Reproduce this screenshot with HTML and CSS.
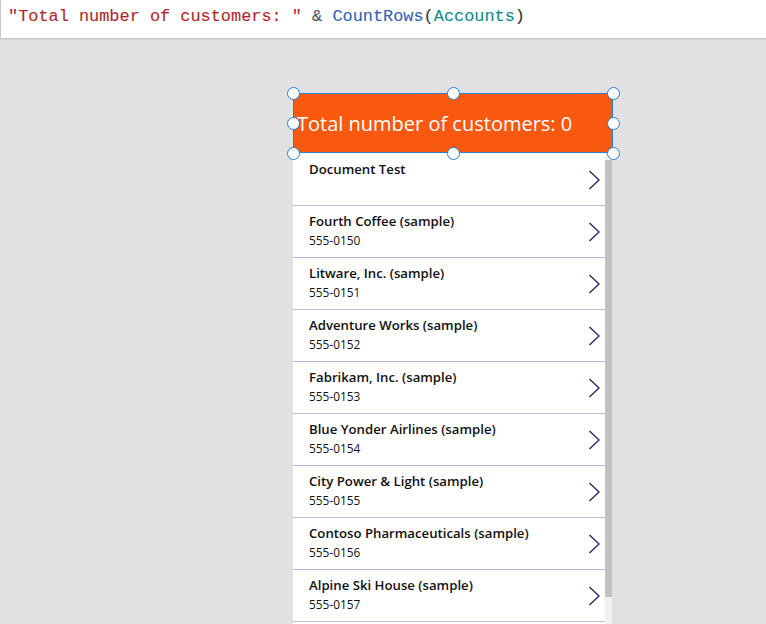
FILE: index.html
```html
<!DOCTYPE html>
<html>
<head>
<meta charset="utf-8">
<link rel="stylesheet" href="styles.css">
</head>
<body>
<div class="formula-bar"><span class="str">"Total number of customers: "</span> <span class="op">&amp;</span> <span class="fn">CountRows</span><span class="paren">(</span><span class="ident">Accounts</span><span class="paren">)</span></div>
<div class="canvas">
  <div class="screen">
    <div class="label-wrap">
      <div class="label">Total number of customers: 0</div>
      <span class="handle h-tl"></span>
      <span class="handle h-tc"></span>
      <span class="handle h-tr"></span>
      <span class="handle h-ml"></span>
      <span class="handle h-mr"></span>
      <span class="handle h-bl"></span>
      <span class="handle h-bc"></span>
      <span class="handle h-br"></span>
    </div>
    <div class="gallery">
      <div class="rows">
        <div class="row"><div class="texts"><div class="title">Document Test</div><div class="sub"></div></div><svg class="chev" viewBox="0 0 12 20"><path d="M1.5 1 L11 10 L1.5 19"/></svg></div>
        <div class="row"><div class="texts"><div class="title">Fourth Coffee (sample)</div><div class="sub">555-0150</div></div><svg class="chev" viewBox="0 0 12 20"><path d="M1.5 1 L11 10 L1.5 19"/></svg></div>
        <div class="row"><div class="texts"><div class="title">Litware, Inc. (sample)</div><div class="sub">555-0151</div></div><svg class="chev" viewBox="0 0 12 20"><path d="M1.5 1 L11 10 L1.5 19"/></svg></div>
        <div class="row"><div class="texts"><div class="title">Adventure Works (sample)</div><div class="sub">555-0152</div></div><svg class="chev" viewBox="0 0 12 20"><path d="M1.5 1 L11 10 L1.5 19"/></svg></div>
        <div class="row"><div class="texts"><div class="title">Fabrikam, Inc. (sample)</div><div class="sub">555-0153</div></div><svg class="chev" viewBox="0 0 12 20"><path d="M1.5 1 L11 10 L1.5 19"/></svg></div>
        <div class="row"><div class="texts"><div class="title">Blue Yonder Airlines (sample)</div><div class="sub">555-0154</div></div><svg class="chev" viewBox="0 0 12 20"><path d="M1.5 1 L11 10 L1.5 19"/></svg></div>
        <div class="row"><div class="texts"><div class="title">City Power &amp; Light (sample)</div><div class="sub">555-0155</div></div><svg class="chev" viewBox="0 0 12 20"><path d="M1.5 1 L11 10 L1.5 19"/></svg></div>
        <div class="row"><div class="texts"><div class="title">Contoso Pharmaceuticals (sample)</div><div class="sub">555-0156</div></div><svg class="chev" viewBox="0 0 12 20"><path d="M1.5 1 L11 10 L1.5 19"/></svg></div>
        <div class="row"><div class="texts"><div class="title">Alpine Ski House (sample)</div><div class="sub">555-0157</div></div><svg class="chev" viewBox="0 0 12 20"><path d="M1.5 1 L11 10 L1.5 19"/></svg></div>
        <div class="row row-empty"></div>
      </div>
      <div class="scrollbar"><div class="thumb"></div></div>
    </div>
  </div>
</div>
</body>
</html>
```

FILE: styles.css
```css
* { box-sizing: border-box; }
html, body { margin: 0; padding: 0; }
body {
  width: 766px;
  height: 624px;
  overflow: hidden;
  background: #e1e1e1;
  font-family: "Open Sans", "Liberation Sans", sans-serif;
}
.formula-bar {
  height: 39px;
  background: #ffffff;
  border-left: 1px solid #c8c8c8;
  border-bottom: 1px solid #c8c8c8;
  box-shadow: 0 1px 0 #d4d4d4;
  padding: 5px 0 0 7px;
  font-family: "Liberation Mono", "DejaVu Sans Mono", monospace;
  font-size: 16.9px;
  line-height: 24px;
  white-space: pre;
  color: #333;
  -webkit-text-stroke: 0.1px currentColor;
}
.str { color: #b0282d; }
.op { color: #555555; }
.fn { color: #3365b2; }
.ident { color: #0e8c8c; }
.paren { color: #333333; }
.canvas {
  padding: 54px 0 0 293px;
}
.screen {
  width: 320px;
}
.label-wrap {
  position: relative;
  height: 60px;
}
.label {
  height: 60px;
  background: #f8590f;
  border: 1px solid #2b7fd0;
  color: #ffffff;
  font-size: 20px;
  line-height: 60px;
  padding-left: 3px;
  white-space: nowrap;
}
.handle {
  position: absolute;
  width: 13px;
  height: 13px;
  border-radius: 50%;
  background: #ffffff;
  border: 1.5px solid #2b7fd0;
  margin: -6.5px 0 0 -6.5px;
}
.h-tl { left: 0; top: 0; }
.h-tc { left: 160px; top: 0; }
.h-tr { left: 320px; top: 0; }
.h-ml { left: 0; top: 30px; }
.h-mr { left: 320px; top: 30px; }
.h-bl { left: 0; top: 60px; }
.h-bc { left: 160px; top: 60px; }
.h-br { left: 320px; top: 60px; }
.gallery {
  display: flex;
  height: 520px;
  overflow: hidden;
}
.rows {
  width: 312px;
  background: #ffffff;
  padding-top: 1px;
}
.row {
  height: 52px;
  border-bottom: 1px solid #b7bddc;
  display: flex;
  align-items: center;
  padding: 0 5px 0 16px;
}
.texts {
  flex: 1;
  align-self: flex-start;
  padding-top: 6px;
}
.title {
  font-size: 13.2px;
  font-weight: 600;
  line-height: 18px;
  color: #111111;
  white-space: nowrap;
}
.sub {
  font-size: 11.9px;
  line-height: 20px;
  height: 20px;
  color: #111111;
}
.chev {
  width: 12px;
  height: 20px;
  fill: none;
  stroke: #242b72;
  stroke-width: 1.4;
}
.scrollbar {
  width: 7px;
  background: #f0f0f0;
  padding-top: 7px;
}
.thumb {
  height: 437px;
  background: #c2c2c2;
}
```
